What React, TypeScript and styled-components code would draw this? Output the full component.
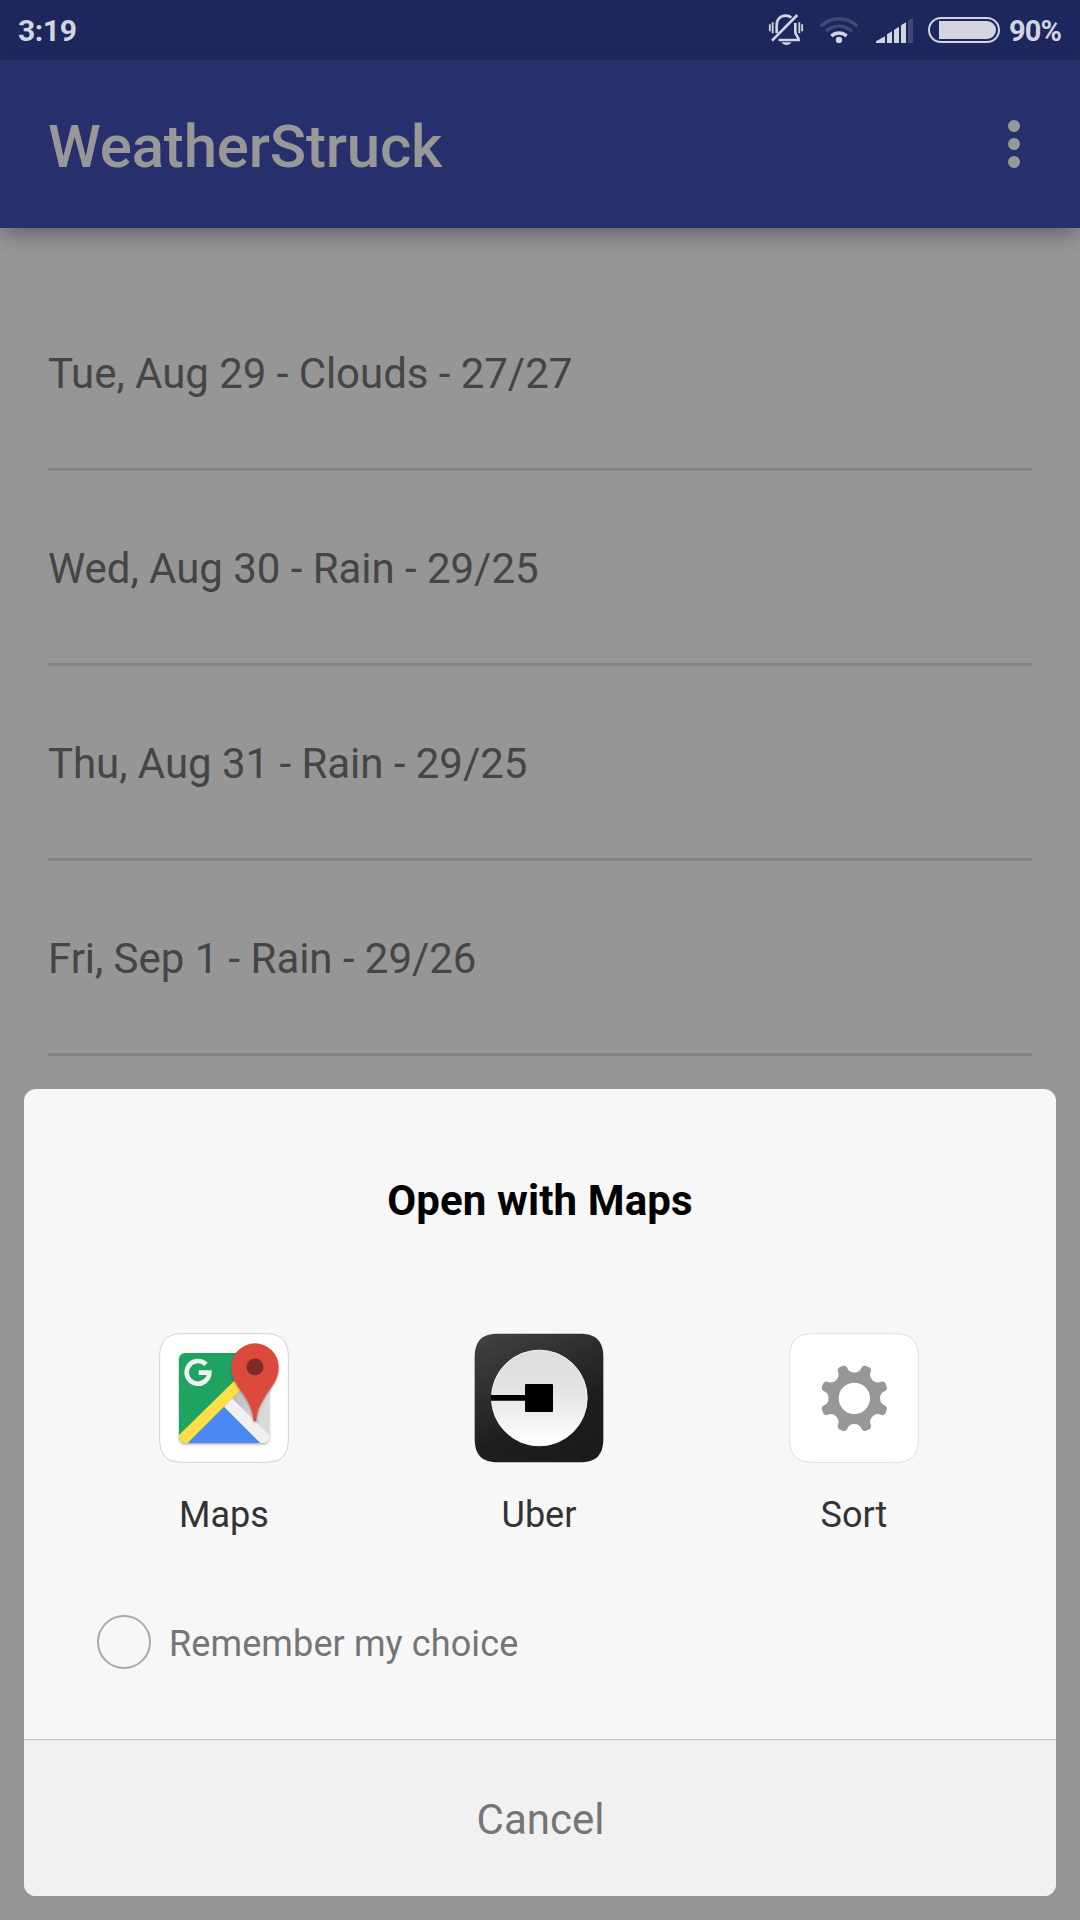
import React from 'react';
import styled, { createGlobalStyle } from 'styled-components';

const GlobalStyle = createGlobalStyle`
  *, *::before, *::after { box-sizing: border-box; }
  body { margin: 0; background: #969696; font-family: Roboto, "Liberation Sans", sans-serif; }
`;

const Screen = styled.div`
  position: relative;
  display: flex;
  flex-direction: column;
  width: 1080px;
  height: 1920px;
  overflow: hidden;
  background: #969696;
`;

const StatusBar = styled.header`
  flex: none;
  display: flex;
  align-items: center;
  justify-content: space-between;
  height: 60px;
  padding: 0 18px 0 18px;
  background: #1e265e;
  color: #d2d4df;
`;

const Clock = styled.span`
  padding-top: 2px;
  font-size: 30px;
  font-weight: 700;
  line-height: 58px;
  letter-spacing: -0.4px;
`;

const StatusIcons = styled.div`
  display: flex;
  align-items: center;
  height: 60px;
`;

const StatusGlyph = styled.svg<{ $gap: number }>`
  display: block;
  flex: none;
  margin-right: ${(p) => p.$gap}px;
`;

const BatteryLevel = styled.span`
  width: 53px;
  padding-top: 2px;
  font-size: 29px;
  font-weight: 700;
  line-height: 58px;
  letter-spacing: -0.9px;
  white-space: nowrap;
`;

const Toolbar = styled.div`
  flex: none;
  z-index: 1;
  display: flex;
  align-items: center;
  justify-content: space-between;
  height: 168px;
  padding: 0 60px 0 48px;
  background: #27306c;
  box-shadow: 0 10px 18px -3px rgba(0, 0, 0, 0.32);
`;

const AppTitle = styled.h1`
  margin: 0;
  padding-top: 6px;
  font-size: 60px;
  font-weight: 500;
  line-height: 70px;
  letter-spacing: -0.18px;
  color: #989898;
`;

const MenuButton = styled.button`
  display: flex;
  flex-direction: column;
  gap: 6px;
  padding: 0;
  border: 0;
  background: none;
`;

const Dot = styled.span`
  width: 12px;
  height: 12px;
  border-radius: 50%;
  background: #989898;
`;

const Forecast = styled.ul`
  list-style: none;
  margin: 0;
  padding: 48px 48px 0;
`;

const ForecastRow = styled.li`
  height: 195px;
  padding-top: 2px;
  border-bottom: 3px solid #838383;
  font-size: 42px;
  line-height: 192px;
  letter-spacing: -0.04px;
  color: #454545;
`;

const Sheet = styled.section`
  position: absolute;
  left: 24px;
  right: 24px;
  bottom: 24px;
  z-index: 2;
  display: flex;
  flex-direction: column;
  height: 807px;
  border-radius: 12px;
  overflow: hidden;
  background: #f7f7f7;
`;

const SheetTitle = styled.h2`
  margin: 87px 0 0;
  font-size: 42px;
  font-weight: 700;
  line-height: 50px;
  letter-spacing: 0.12px;
  text-align: center;
  color: #000;
`;

const AppGrid = styled.div`
  display: grid;
  grid-template-columns: repeat(3, 315px);
  margin: 107px 0 0 42px;
`;

const AppOption = styled.button`
  display: flex;
  flex-direction: column;
  align-items: center;
  gap: 28px;
  padding: 0;
  border: 0;
  background: none;
  font: 400 36px/48px Roboto, "Liberation Sans", sans-serif;
  color: #333;
`;

const AppName = styled.span`
  padding-left: 1px;
`;

const Tile = styled.svg`
  display: block;
  width: 130px;
  height: 130px;
`;

const Remember = styled.label`
  display: flex;
  align-items: center;
  gap: 18px;
  margin: 76px 0 0 73px;
  height: 54px;
  font-size: 36px;
  line-height: 54px;
  letter-spacing: 0.11px;
  color: #757575;
`;

const Radio = styled.span`
  width: 54px;
  height: 54px;
  border: 2px solid #a9a9a9;
  border-radius: 50%;
`;

const RememberText = styled.span`
  padding-top: 3px;
`;

const CancelButton = styled.button`
  margin-top: auto;
  height: 157px;
  padding: 3px 0 0 1px;
  border: 0;
  border-top: 1px solid #bfbfbf;
  background: #f1f1f1;
  font: 400 42px/50px Roboto, "Liberation Sans", sans-serif;
  color: #757575;
`;

const BRIGHT = '#d2d4df';
const DIM = '#414877';

const SilentIcon = () => (
  <StatusGlyph $gap={15} width="36" height="33" viewBox="54 41 108 99" fill="none" stroke={BRIGHT}>
    <path d="M80 98V76C80 57 91 46 108 46C114 46 120 48 124 52" strokeWidth="8" />
    <path d="M136 68V96C136 106 146 108 146 119H86" strokeWidth="8" />
    <path d="M66 121L142 44" strokeWidth="8" />
    <path d="M95 126H124C120 137 99 137 95 126Z" fill={BRIGHT} stroke="none" />
    <path d="M59.500 72V93M68 66V99M148 66V99M156.500 72V93" strokeWidth="5.500" />
  </StatusGlyph>
);

const WifiIcon = () => (
  <StatusGlyph $gap={17} width="40" height="30" viewBox="207 45 120 90" fill="none">
    <path d="M212 79A78 78 0 0 1 322 79" stroke={DIM} strokeWidth="10" />
    <path d="M228 94A56 56 0 0 1 306 94" stroke={DIM} strokeWidth="10" />
    <path d="M244 108A34 34 0 0 1 290 108" stroke={BRIGHT} strokeWidth="10" />
    <circle cx="267" cy="120" r="9.500" fill={BRIGHT} />
  </StatusGlyph>
);

const SignalIcon = () => (
  <StatusGlyph $gap={14} width="38" height="30" viewBox="378 45 114 90" fill={BRIGHT}>
    <path d="M378 129V124L405 109V129Z" />
    <path d="M411 129V103L426 94V129Z" />
    <path d="M432 129V90L447 80V129Z" />
    <path d="M453 129V76L468 67V129Z" />
    <path d="M474 129V62L489 53V129Z" fill={DIM} />
  </StatusGlyph>
);

const BatteryIcon = () => (
  <StatusGlyph $gap={9} width="72" height="26" viewBox="0 0 72 26" fill="none">
    <rect x="1" y="1" width="70" height="24" rx="12" stroke={BRIGHT} strokeWidth="2" />
    <path d="M11 4H59A9 9 0 0 1 59 22H11Z" fill={BRIGHT} />
  </StatusGlyph>
);

const TILE_SHAPE =
  'M29 113C29 62 50 41 101 41H343C394 41 415 62 415 113V355C415 406 394 427 343 427H101C50 427 29 406 29 355Z';

const MapsIcon = () => (
  <Tile viewBox="27 39 390 390">
    <defs>
      <clipPath id="map-sheet">
        <rect x="87" y="99" width="271" height="270" rx="18" />
      </clipPath>
      <linearGradient id="map-fold" x1="0" y1="0" x2="1" y2="0.4">
        <stop offset="0.3" stopColor="#bdbdbd" />
        <stop offset="1" stopColor="#dadada" />
      </linearGradient>
      <filter id="map-shadow" x="-20%" y="-20%" width="140%" height="140%">
        <feDropShadow dx="0" dy="4" stdDeviation="3" floodOpacity="0.35" />
      </filter>
    </defs>
    <path d={TILE_SHAPE} fill="#fff" stroke="#d0d0d0" strokeWidth="3" />
    <rect x="87" y="99" width="271" height="270" rx="18" fill="#eee" filter="url(#map-shadow)" />
    <g clipPath="url(#map-sheet)">
      <path d="M87 99H358V369H87Z" fill="#1fa361" />
      <path d="M358 99V369H332L222 260L358 124Z" fill="url(#map-fold)" />
      <path d="M222 260L112 370H332Z" fill="#4889f4" />
      <path d="M222 260L246 235L368 356V380H342Z" fill="#f1f1f1" />
      <path d="M76 356L290 146L314 168L101 381H76Z" fill="#ffdf48" />
    </g>
    <path d="M168 133A34 34 0 1 0 178 158H146" fill="none" stroke="#f1f1f1" strokeWidth="14" />
    <g filter="url(#map-shadow)">
      <path
        d="M244 141A71 71 0 0 1 386 141C386 182 362 202 346 228C328 256 320 277 319 303H310C309 277 301 256 284 228C267 202 244 182 244 141Z"
        fill="#dc4a3e"
      />
    </g>
    <circle cx="315" cy="141" r="25.500" fill="#7f2a26" />
  </Tile>
);

const UberIcon = () => (
  <Tile viewBox="27 39 390 390">
    <defs>
      <linearGradient id="uber-tile" x1="0.1" y1="0" x2="0.6" y2="1">
        <stop offset="0" stopColor="#414141" />
        <stop offset="0.7" stopColor="#1e1e1e" />
        <stop offset="1" stopColor="#1b1b1b" />
      </linearGradient>
      <linearGradient id="uber-disc" x1="0" y1="0" x2="0" y2="1">
        <stop offset="0" stopColor="#dcdddf" />
        <stop offset="0.4" stopColor="#e3e3e4" />
        <stop offset="1" stopColor="#ffffff" />
      </linearGradient>
    </defs>
    <path d={TILE_SHAPE} fill="url(#uber-tile)" />
    <circle cx="223" cy="234" r="143.500" fill="url(#uber-disc)" stroke="#f6f6f6" strokeWidth="3" />
    <path d="M78 225H181V242H78Z" fill="#000" />
    <rect x="180" y="192" width="84" height="84" rx="3" fill="#000" />
  </Tile>
);

const TOOTH_ANGLES = [22.5, 67.5, 112.5, 157.5, 202.5, 247.5, 292.5, 337.5];

// Each tooth is described relative to its own axis, as [radius, sideways offset].
const gearPath = () => {
  const at = (angle: number, r: number, side: number) => {
    const a = (angle * Math.PI) / 180;
    const x = 223 + r * Math.sin(a) + side * Math.cos(a);
    const y = 235 - r * Math.cos(a) + side * Math.sin(a);
    return `${x.toFixed(1)} ${y.toFixed(1)}`;
  };
  const parts = TOOTH_ANGLES.map((t, i) => {
    const lead = i === 0 ? 'M' : 'L';
    return (
      `${lead}${at(t, 93, -15)}Q${at(t, 101, -15)} ${at(t, 103, -7)}` +
      `L${at(t, 103, 7)}Q${at(t, 101, 15)} ${at(t, 93, 15)}` +
      `A23.500 23.500 0 0 0 ${at(t + 45, 93, -15)}`
    );
  });
  return `${parts.join('')}ZM270 235A47 47 0 1 0 176 235A47 47 0 1 0 270 235Z`;
};

const SortIcon = () => (
  <Tile viewBox="27 39 390 390">
    <path d={TILE_SHAPE} fill="#fff" stroke="#dedede" strokeWidth="3" />
    <path d={gearPath()} fill="#979797" fillRule="evenodd" />
  </Tile>
);

const forecast = [
  'Tue, Aug 29 - Clouds - 27/27',
  'Wed, Aug 30 - Rain - 29/25',
  'Thu, Aug 31 - Rain - 29/25',
  'Fri, Sep 1 - Rain - 29/26',
];

const apps = [
  { name: 'Maps', Icon: MapsIcon },
  { name: 'Uber', Icon: UberIcon },
  { name: 'Sort', Icon: SortIcon },
];

export default function App() {
  return (
    <>
      <GlobalStyle />
      <Screen>
        <StatusBar>
          <Clock>3:19</Clock>
          <StatusIcons>
            <SilentIcon />
            <WifiIcon />
            <SignalIcon />
            <BatteryIcon />
            <BatteryLevel>90%</BatteryLevel>
          </StatusIcons>
        </StatusBar>
        <Toolbar>
          <AppTitle>WeatherStruck</AppTitle>
          <MenuButton aria-label="More options">
            <Dot />
            <Dot />
            <Dot />
          </MenuButton>
        </Toolbar>
        <Forecast>
          {forecast.map((day) => (
            <ForecastRow key={day}>{day}</ForecastRow>
          ))}
        </Forecast>
        <Sheet>
          <SheetTitle>Open with Maps</SheetTitle>
          <AppGrid>
            {apps.map(({ name, Icon }) => (
              <AppOption key={name}>
                <Icon />
                <AppName>{name}</AppName>
              </AppOption>
            ))}
          </AppGrid>
          <Remember>
            <Radio />
            <RememberText>Remember my choice</RememberText>
          </Remember>
          <CancelButton>Cancel</CancelButton>
        </Sheet>
      </Screen>
    </>
  );
}
